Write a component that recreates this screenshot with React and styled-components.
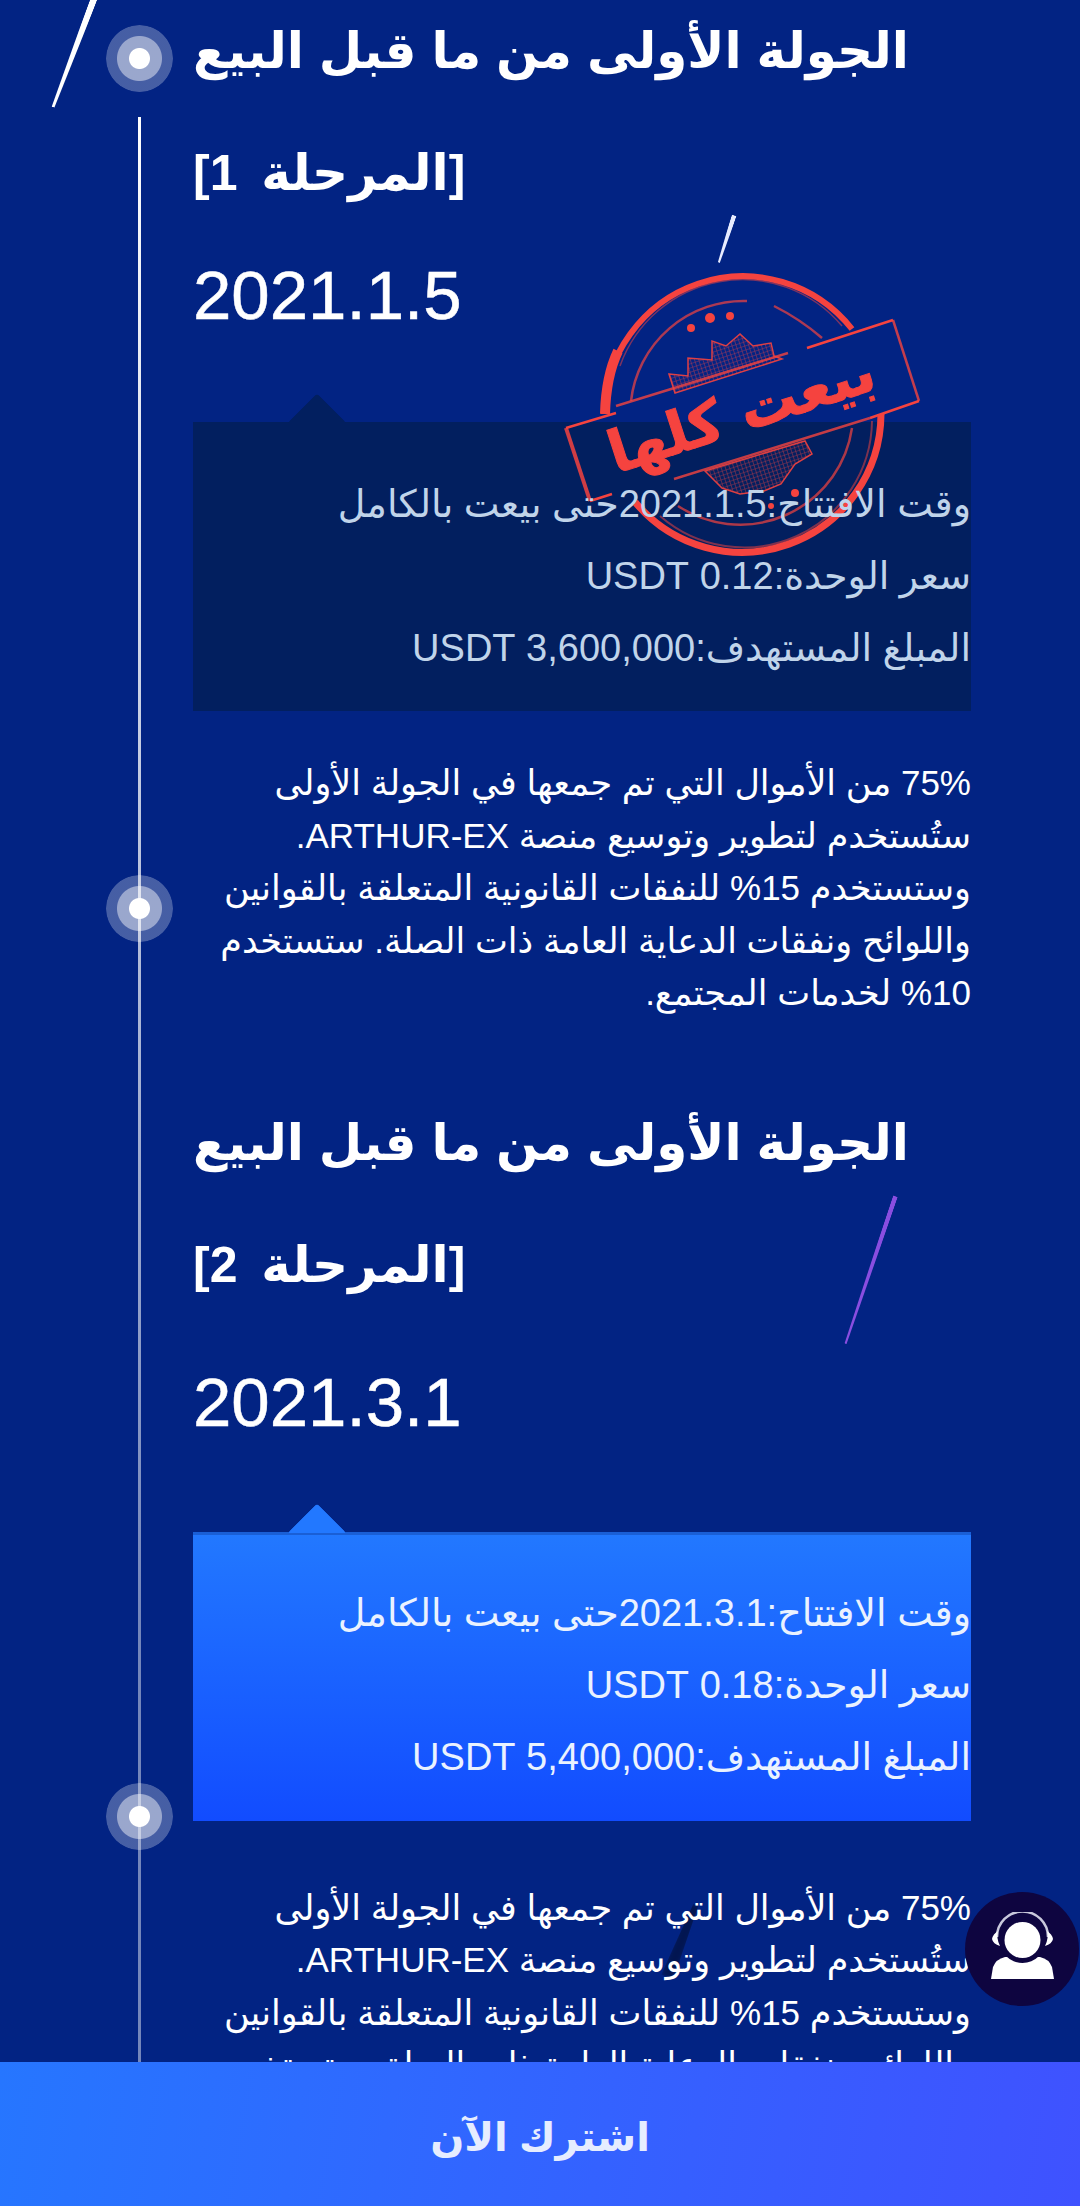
import React from 'react';
import styled, { createGlobalStyle } from 'styled-components';

const GlobalStyle = createGlobalStyle`
	html, body { margin: 0; padding: 0; background: #ffffff; }
	body { font-family: "Liberation Sans", "DejaVu Sans", sans-serif; }
	#root { height: 2207px; overflow: hidden; }
`;

const Page = styled.div`
	position: relative;
	width: 1080px;
	height: 2206px;
	overflow: hidden;
	background: #022383;
`;

const Timeline = styled.div`
	position: relative;
	margin-top: -10px;
	padding: 0 109px 0 193px;
`;

const Rail = styled.div`
	position: absolute;
	left: 138px;
	top: 127px;
	width: 3px;
	height: 2100px;
	background: linear-gradient(to bottom, #ffffff 0, rgba(255, 255, 255, 0.45) 1500px);
`;

const Dot = styled.div`
	position: absolute;
	left: 106px;
	top: ${(p) => p.$top}px;
	width: 67px;
	height: 67px;
	border-radius: 50%;
	background: radial-gradient(circle, #ffffff 0 10px, rgba(255, 255, 255, 0.6) 11px 22px, rgba(255, 255, 255, 0.27) 23px 33px, transparent 34px);
`;

const Star = styled.div`
	position: absolute;
	left: ${(p) => p.$left}px;
	top: ${(p) => p.$top}px;
	width: ${(p) => p.$thick}px;
	height: ${(p) => p.$length}px;
	background: ${(p) => p.$color};
	clip-path: polygon(0 0, 100% 0, 70% 100%, 30% 100%);
	transform: rotate(${(p) => p.$angle}deg);
	filter: ${(p) => (p.$soft ? 'blur(2px)' : 'none')};
`;

const Item = styled.section`
	position: relative;
	padding-top: ${(p) => p.$gap}px;
`;

const Title = styled.h2`
	margin: 0;
	direction: rtl;
	text-align: left;
	font-size: 50px;
	font-weight: 700;
	word-spacing: 1px;
	line-height: 122px;
	color: #ffffff;
`;

const Stage = styled.span`
	word-spacing: 10px;
`;

const DateLine = styled.div`
	margin-top: ${(p) => p.$gap}px;
	font-size: 69px;
	line-height: 124px;
	color: #ffffff;
	-webkit-text-stroke: 0.5px #ffffff;
`;

const Panel = styled.div`
	position: relative;
	margin-top: ${(p) => (p.$active ? 67 : 64)}px;
	padding: ${(p) => (p.$active ? '42px 0 28px' : '43px 0 27px')};
	background: ${(p) => (p.$active ? 'linear-gradient(to bottom, #2278ff, #124cff)' : '#021f5f')};
	border-top: 3px solid ${(p) => (p.$active ? '#1a5fd6' : '#021f5f')};
	&::before {
		content: '';
		position: absolute;
		left: 103px;
		top: -23px;
		width: 42px;
		height: 42px;
		border-radius: 4px;
		transform: rotate(45deg);
		background: ${(p) => (p.$active ? '#2278ff' : '#021f5f')};
		clip-path: polygon(0 0, 100% 0, 0 100%);
	}
`;

const PanelRow = styled.div`
	position: relative;
	direction: rtl;
	font-size: 38px;
	line-height: 72px;
	color: ${(p) => (p.$active ? '#eaf2ff' : '#c0d4ea')};
`;

const Stamp = styled.svg`
	position: absolute;
	left: 367px;
	top: -154px;
`;

const Body = styled.p`
	margin: ${(p) => p.$gap}px 0 0;
	direction: rtl;
	font-size: 35px;
	line-height: 1.5;
	color: #ffffff;
`;

const Support = styled.div`
	position: absolute;
	right: 1px;
	bottom: 200px;
	width: 114px;
	height: 114px;
	border-radius: 50%;
	background: #0e0540;
	display: flex;
	align-items: center;
	justify-content: center;
	svg { margin-bottom: 8px; }
`;

const SubscribeBar = styled.div`
	position: absolute;
	left: 0;
	right: 0;
	bottom: 0;
	height: 144px;
	padding-top: 5px;
	box-sizing: border-box;
	display: flex;
	align-items: center;
	justify-content: center;
	background: linear-gradient(100deg, #2676ff, #3f52ff);
	direction: rtl;
	font-size: 40px;
	font-weight: 700;
	color: #e6edff;
`;

const RED = '#f5433f';

function SoldStamp() {
	return (
		<Stamp width="370" height="300" viewBox="0 0 370 300" fill="none">
			<defs>
				<pattern id="hatch" width="4" height="4" patternUnits="userSpaceOnUse" patternTransform="rotate(-18)">
					<path d="M0 0H4M0 0V4" stroke={RED} strokeWidth="1.2" opacity="0.7" />
				</pattern>
			</defs>
			<path d="M44 143A139 139 0 0 1 292 58" stroke={RED} strokeWidth="6" />
			<path d="M45 143Q46 105 58 80" stroke={RED} strokeWidth="10" />
			<path d="M321 143A139 139 0 0 1 75 231" stroke={RED} strokeWidth="7" />
			<path d="M60 95A130 130 0 0 1 282 55" stroke={RED} strokeWidth="1.5" opacity="0.5" />
			<path d="M312 150A128 128 0 0 1 100 245" stroke={RED} strokeWidth="2" opacity="0.5" />
			<path d="M71 130A113 113 0 0 1 187 30" stroke={RED} strokeWidth="2.5" opacity="0.7" />
			<path d="M214 35Q240 48 262 67" stroke={RED} strokeWidth="2.5" opacity="0.7" />
			<path d="M292 157A113 113 0 0 1 118 235" stroke={RED} strokeWidth="2.5" opacity="0.7" />
			<path d="M56 135L228 82M114 208L310 147" stroke={RED} strokeWidth="2.5" opacity="0.8" />
			<path d="M109 103L128 105L128 87L152 89L152 70L166 75L180 63L193 75L211 72L214 85L222 88L115 122Z" fill="url(#hatch)" stroke={RED} strokeWidth="1.5" opacity="0.9" />
			<path d="M145 200L162 217L180 223L204 220L221 213L235 193L252 183L245 170Z" fill="url(#hatch)" stroke={RED} strokeWidth="1.5" opacity="0.9" />
			<circle cx="131" cy="57" r="4" fill={RED} />
			<circle cx="150" cy="47" r="5" fill={RED} />
			<circle cx="170" cy="45" r="4" fill={RED} />
			<circle cx="235" cy="222" r="4" fill={RED} />
			<circle cx="211" cy="235" r="3" fill={RED} />
			<path d="M333 49L359 130" stroke={RED} strokeWidth="2.5" opacity="0.8" />
			<path d="M6 157L30 230" stroke={RED} strokeWidth="4" opacity="0.85" />
			<path d="M333 49L247 77M359 130L310 147M6 157L56 142M30 230L52 223" stroke={RED} strokeWidth="2.5" />
			<text x="181" y="161" textAnchor="middle" direction="rtl" fontFamily="DejaVu Sans" fontWeight="700" fontSize="58" fill={RED} stroke={RED} strokeWidth="1" transform="rotate(-18 181 140)">بيعت كلها</text>
		</Stamp>
	);
}

function SupportIcon() {
	return (
		<svg width="65" height="67" viewBox="0 0 65 67">
			<path d="M1 67L3 55Q6 47 15 45L50 45Q59 47 62 55L64 67Z" fill="#ffffff" />
			<path d="M7 25A25.5 25.5 0 0 1 58 25" fill="none" stroke="#c9c9dc" strokeWidth="2.5" />
			<circle cx="32.5" cy="28" r="23" fill="#0e0540" />
			<path d="M8 19Q3 22 2 27Q3 32 10 34Q6 26 8 19Z" fill="#ffffff" />
			<path d="M57 19Q62 22 63 27Q62 32 55 34Q59 26 57 19Z" fill="#ffffff" />
			<circle cx="32.5" cy="28" r="18" fill="#ffffff" />
		</svg>
	);
}

const rounds = [
	{
		key: 1,
		stage: '[المرحلة 1]',
		date: '2021.1.5',
		dateGap: 0,
		titleGap: 0,
		bodyGap: 46,
		price: '0.12',
		target: '3,600,000',
	},
	{
		key: 2,
		stage: '[المرحلة 2]',
		date: '2021.3.1',
		dateGap: 15,
		titleGap: 62,
		bodyGap: 61,
		price: '0.18',
		target: '5,400,000',
		active: true,
	},
];

export default function App() {
	return (
		<Page>
			<GlobalStyle />
			<Timeline>
				<Rail />
				<Dot $top={35} />
				<Dot $top={885} />
				<Dot $top={1793} />
				<Star $left={70} $top={5} $thick={7} $length={116} $angle={20.7} $color="#ffffff" />
				<Star $left={724} $top={224} $thick={5} $length={50} $angle={18} $color="#e8ecff" />
				<Star $left={868} $top={1202} $thick={5} $length={156} $angle={18.7} $color="#8a4ee0" />
				<Star $left={675} $top={1912} $thick={13} $length={78} $angle={201.6} $color="rgba(2, 20, 75, 0.9)" $soft />
				{rounds.map((round) => (
					<Item key={round.key} $gap={round.titleGap}>
						<Title>الجولة الأولى من ما قبل البيع <Stage>{round.stage}</Stage></Title>
						<DateLine $gap={round.dateGap}>{round.date}</DateLine>
						<Panel $active={round.active}>
							{!round.active && <SoldStamp />}
							<PanelRow $active={round.active}>وقت الافتتاح:{round.date}حتى بيعت بالكامل</PanelRow>
							<PanelRow $active={round.active}>سعر الوحدة:{round.price} USDT</PanelRow>
							<PanelRow $active={round.active}>المبلغ المستهدف:{round.target} USDT</PanelRow>
						</Panel>
						<Body $gap={round.bodyGap}>
							75% من الأموال التي تم جمعها في الجولة الأولى ستُستخدم لتطوير وتوسيع منصة ARTHUR-EX. وستستخدم 15% للنفقات القانونية المتعلقة بالقوانين واللوائح ونفقات الدعاية العامة ذات الصلة. ستستخدم 10% لخدمات المجتمع.
						</Body>
					</Item>
				))}
			</Timeline>
			<Support>
				<SupportIcon />
			</Support>
			<SubscribeBar>اشترك الآن</SubscribeBar>
		</Page>
	);
}
